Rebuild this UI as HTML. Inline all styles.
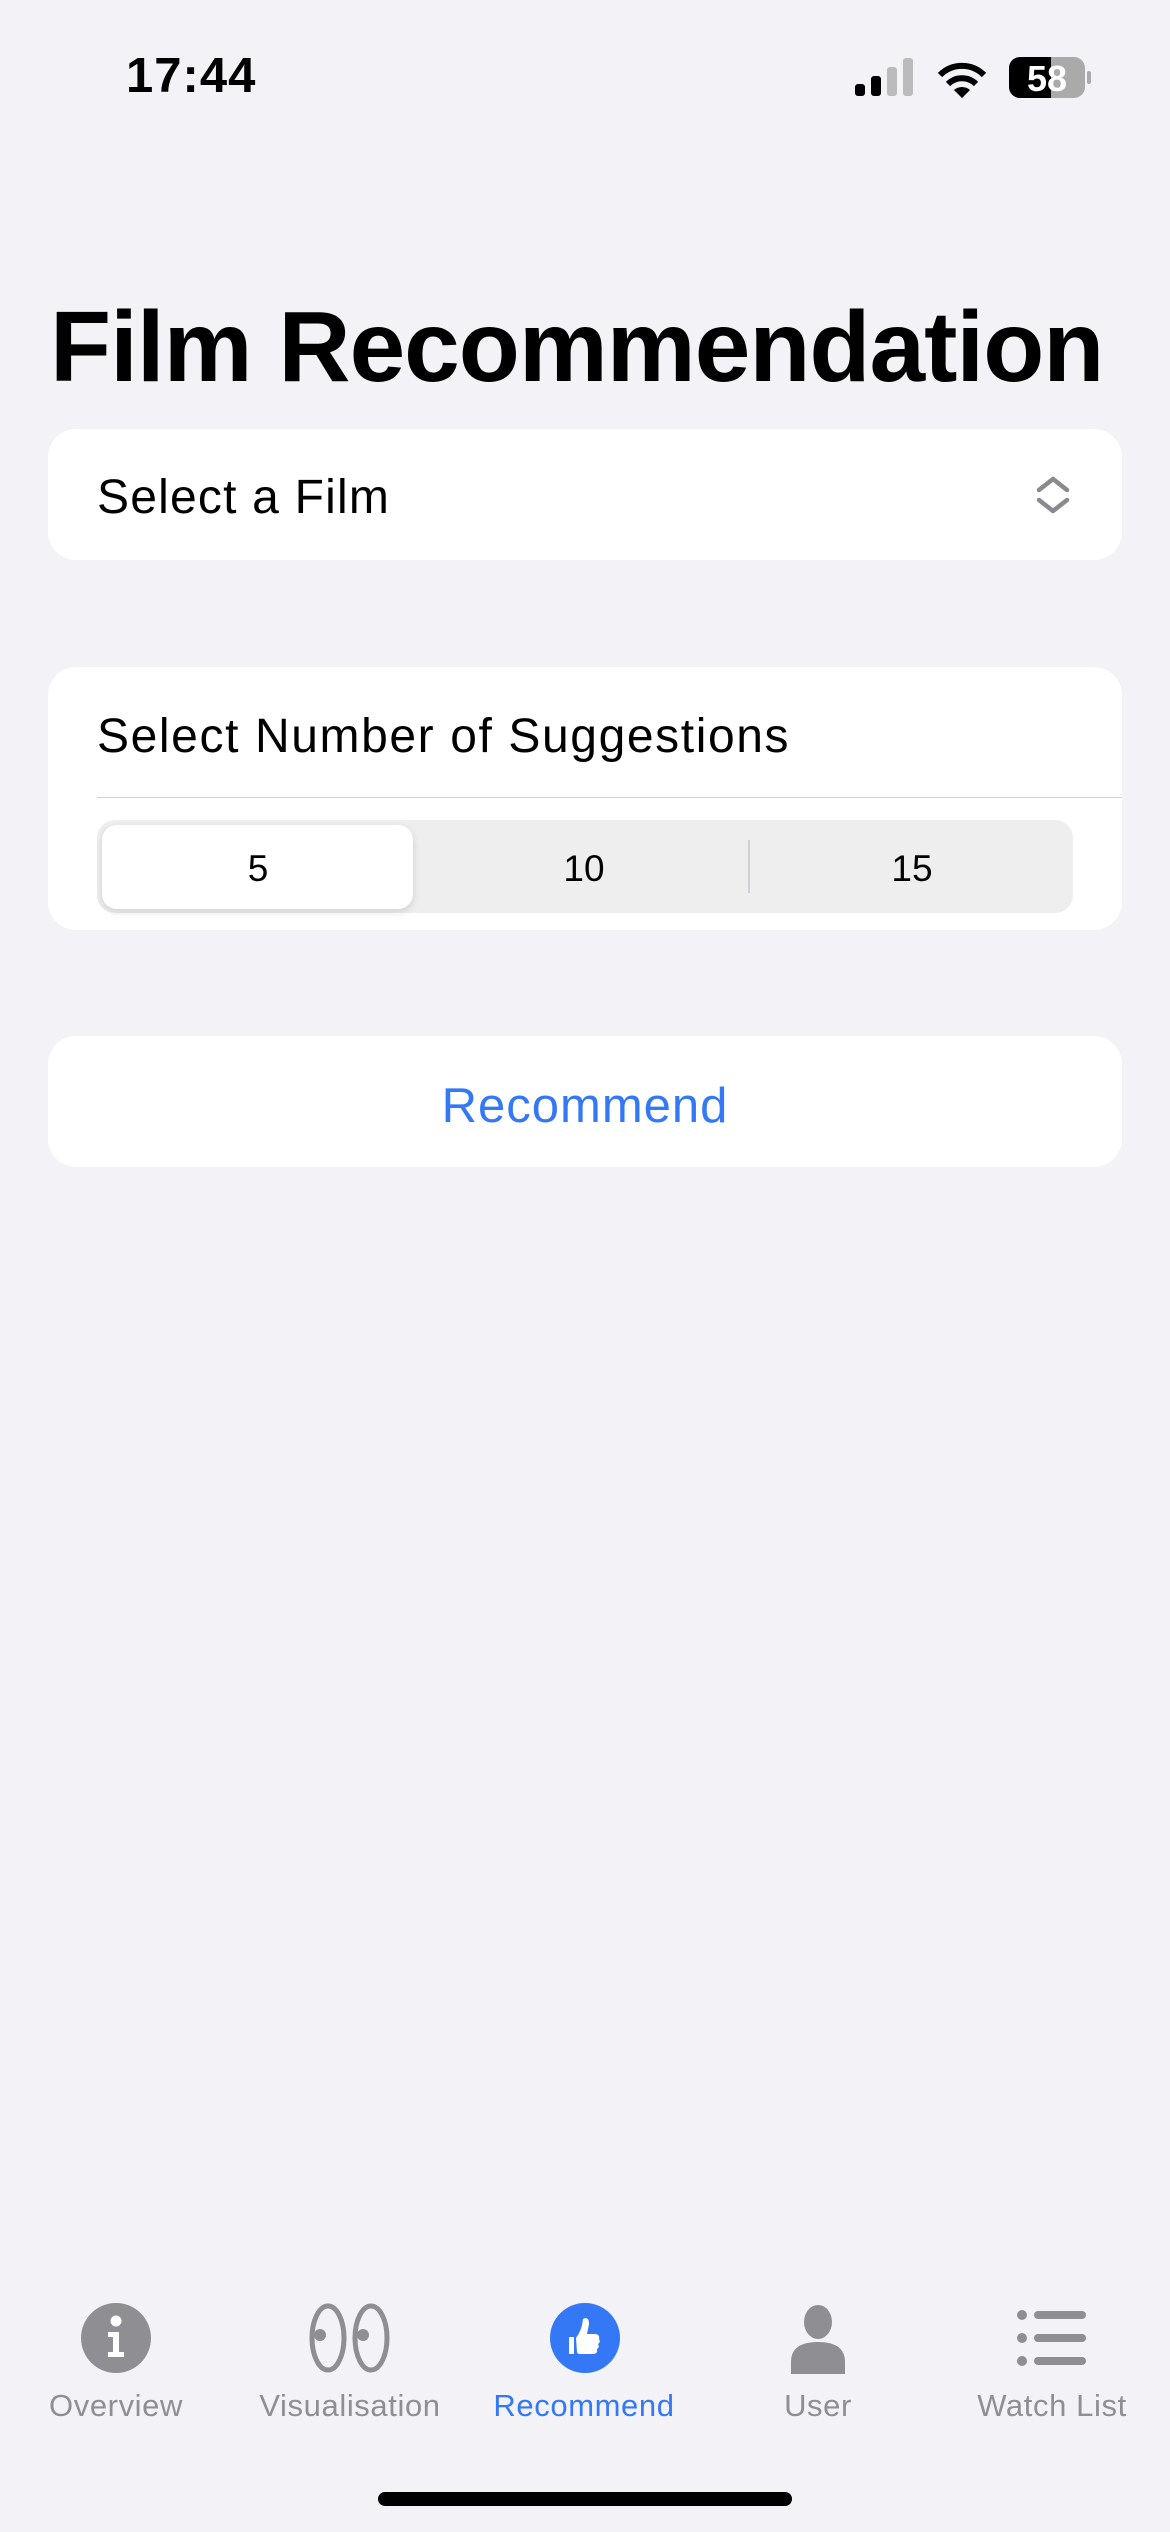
<!DOCTYPE html>
<html><head><meta charset="utf-8"><style>
*{margin:0;padding:0;box-sizing:border-box}
body{width:1170px;height:2532px;background:#f2f2f7;font-family:"Liberation Sans",sans-serif;position:relative;overflow:hidden}
.a{position:absolute}
.card{position:absolute;left:48px;width:1074px;background:#fff;border-radius:28px}
.t{position:absolute;line-height:1;white-space:nowrap}
.lab{position:absolute;top:2389px;font-size:31px;letter-spacing:0.6px;color:#8e8e93;width:260px;text-align:center;line-height:34px}
</style></head><body>
<div class="t" style="left:126px;top:52px;font-size:49px;font-weight:bold;letter-spacing:1px">17:44</div>
<svg class="a" style="left:855px;top:58px" width="60" height="38"><rect x="0" y="26" width="10" height="12" rx="3"/><rect x="16" y="18" width="10" height="20" rx="3"/><rect x="32" y="9" width="10" height="29" rx="3" fill="#bbb"/><rect x="48" y="0" width="10" height="38" rx="3" fill="#bbb"/></svg>
<svg class="a" style="left:935px;top:58px" width="54" height="40" viewBox="0 0 54 40"><path d="M27 40 L19 32 A12 12 0 0 1 35 32Z"/><path d="M13 26 A20 20 0 0 1 41 26" stroke="#000" stroke-width="6" fill="none"/><path d="M5 17 A31 31 0 0 1 49 17" stroke="#000" stroke-width="6" fill="none"/></svg>
<svg class="a" style="left:1009px;top:57px" width="84" height="42"><rect x="0" y="0" width="76" height="41" rx="11" fill="#aaa"/><path d="M11 0 H42 V41 H11 A11 11 0 0 1 0 30 V11 A11 11 0 0 1 11 0Z"/><rect x="78" y="14" width="4" height="13" rx="2" fill="#aaa"/><text x="38" y="34" font-family="Liberation Sans" font-weight="bold" font-size="36" fill="#fff" text-anchor="middle">58</text></svg>
<div class="t" style="left:50px;top:297px;font-size:100px;font-weight:bold;letter-spacing:-1px">Film Recommendation</div>
<div class="card" style="top:429px;height:131px"></div>
<div class="t" style="left:97px;top:474px;font-size:48px;letter-spacing:1.2px">Select a Film</div>
<svg class="a" style="left:1036px;top:476px" width="34" height="38"><path d="M3 14 L17 3 L31 14 M3 24 L17 35 L31 24" stroke="#8a8a8e" stroke-width="4.5" fill="none" stroke-linecap="round" stroke-linejoin="round"/></svg>
<div class="card" style="top:667px;height:263px"></div>
<div class="t" style="left:97px;top:713px;font-size:48px;letter-spacing:1.6px">Select Number of Suggestions</div>
<div class="a" style="left:97px;top:797px;width:1025px;height:1px;background:#d1d1d6"></div>
<div class="a" style="left:97px;top:820px;width:976px;height:93px;background:#eeeeef;border-radius:18px"></div>
<div class="a" style="left:102px;top:825px;width:311px;height:84px;background:#fff;border-radius:15px;box-shadow:0 3px 8px rgba(0,0,0,.12)"></div>
<div class="a" style="left:748px;top:840px;width:2px;height:53px;background:#d0d0d4"></div>
<div class="t" style="left:158px;top:850px;width:200px;text-align:center;font-size:37px">5</div>
<div class="t" style="left:484px;top:850px;width:200px;text-align:center;font-size:37px">10</div>
<div class="t" style="left:812px;top:850px;width:200px;text-align:center;font-size:37px">15</div>
<div class="card" style="top:1036px;height:131px"></div>
<div class="t" style="left:48px;top:1082px;width:1074px;text-align:center;font-size:49px;letter-spacing:1px;color:#3478f6">Recommend</div>
<svg class="a" style="left:80px;top:2302px" width="72" height="72"><circle cx="36" cy="36" r="35" fill="#8e8e93"/><circle cx="36" cy="19" r="5.5" fill="#fff"/><path d="M28 30 H39 V50 H44 V55 H28 V50 H33 V35 H28Z" fill="#fff"/></svg>
<svg class="a" style="left:308px;top:2303px" width="84" height="70"><ellipse cx="20" cy="35" rx="16" ry="32" fill="none" stroke="#8e8e93" stroke-width="5"/><ellipse cx="63" cy="35" rx="16" ry="32" fill="none" stroke="#8e8e93" stroke-width="5"/><circle cx="12" cy="32" r="6" fill="#8e8e93"/><circle cx="55" cy="32" r="6" fill="#8e8e93"/></svg>
<svg class="a" style="left:549px;top:2302px" width="72" height="72"><circle cx="36" cy="36" r="35" fill="#3478f6"/><path d="M27 36 Q33 28 34 17 Q40 14 40 22 L38 32 H47 Q51 33 50 37 Q52 40 49 42 Q51 45 48 47 Q49 51 45 52 H31 Q28 52 28 50Z M20 35 H25 V52 H20Z" fill="#fff"/></svg>
<svg class="a" style="left:788px;top:2304px" width="60" height="70"><ellipse cx="30" cy="18" rx="14" ry="17" fill="#8e8e93"/><path d="M3 70 V58 Q3 38 30 38 Q57 38 57 58 V70Z" fill="#8e8e93"/></svg>
<svg class="a" style="left:1016px;top:2310px" width="72" height="56"><circle cx="6" cy="5" r="5" fill="#8e8e93"/><circle cx="6" cy="28" r="5" fill="#8e8e93"/><circle cx="6" cy="51" r="5" fill="#8e8e93"/><rect x="18" y="1" width="52" height="8" rx="4" fill="#8e8e93"/><rect x="18" y="24" width="52" height="8" rx="4" fill="#8e8e93"/><rect x="18" y="47" width="52" height="8" rx="4" fill="#8e8e93"/></svg>
<div class="lab" style="left:-14px">Overview</div>
<div class="lab" style="left:220px">Visualisation</div>
<div class="lab" style="left:454px;color:#3478f6">Recommend</div>
<div class="lab" style="left:688px">User</div>
<div class="lab" style="left:922px">Watch List</div>
<div class="a" style="left:378px;top:2492px;width:414px;height:14px;border-radius:7px;background:#000"></div>
</body></html>
